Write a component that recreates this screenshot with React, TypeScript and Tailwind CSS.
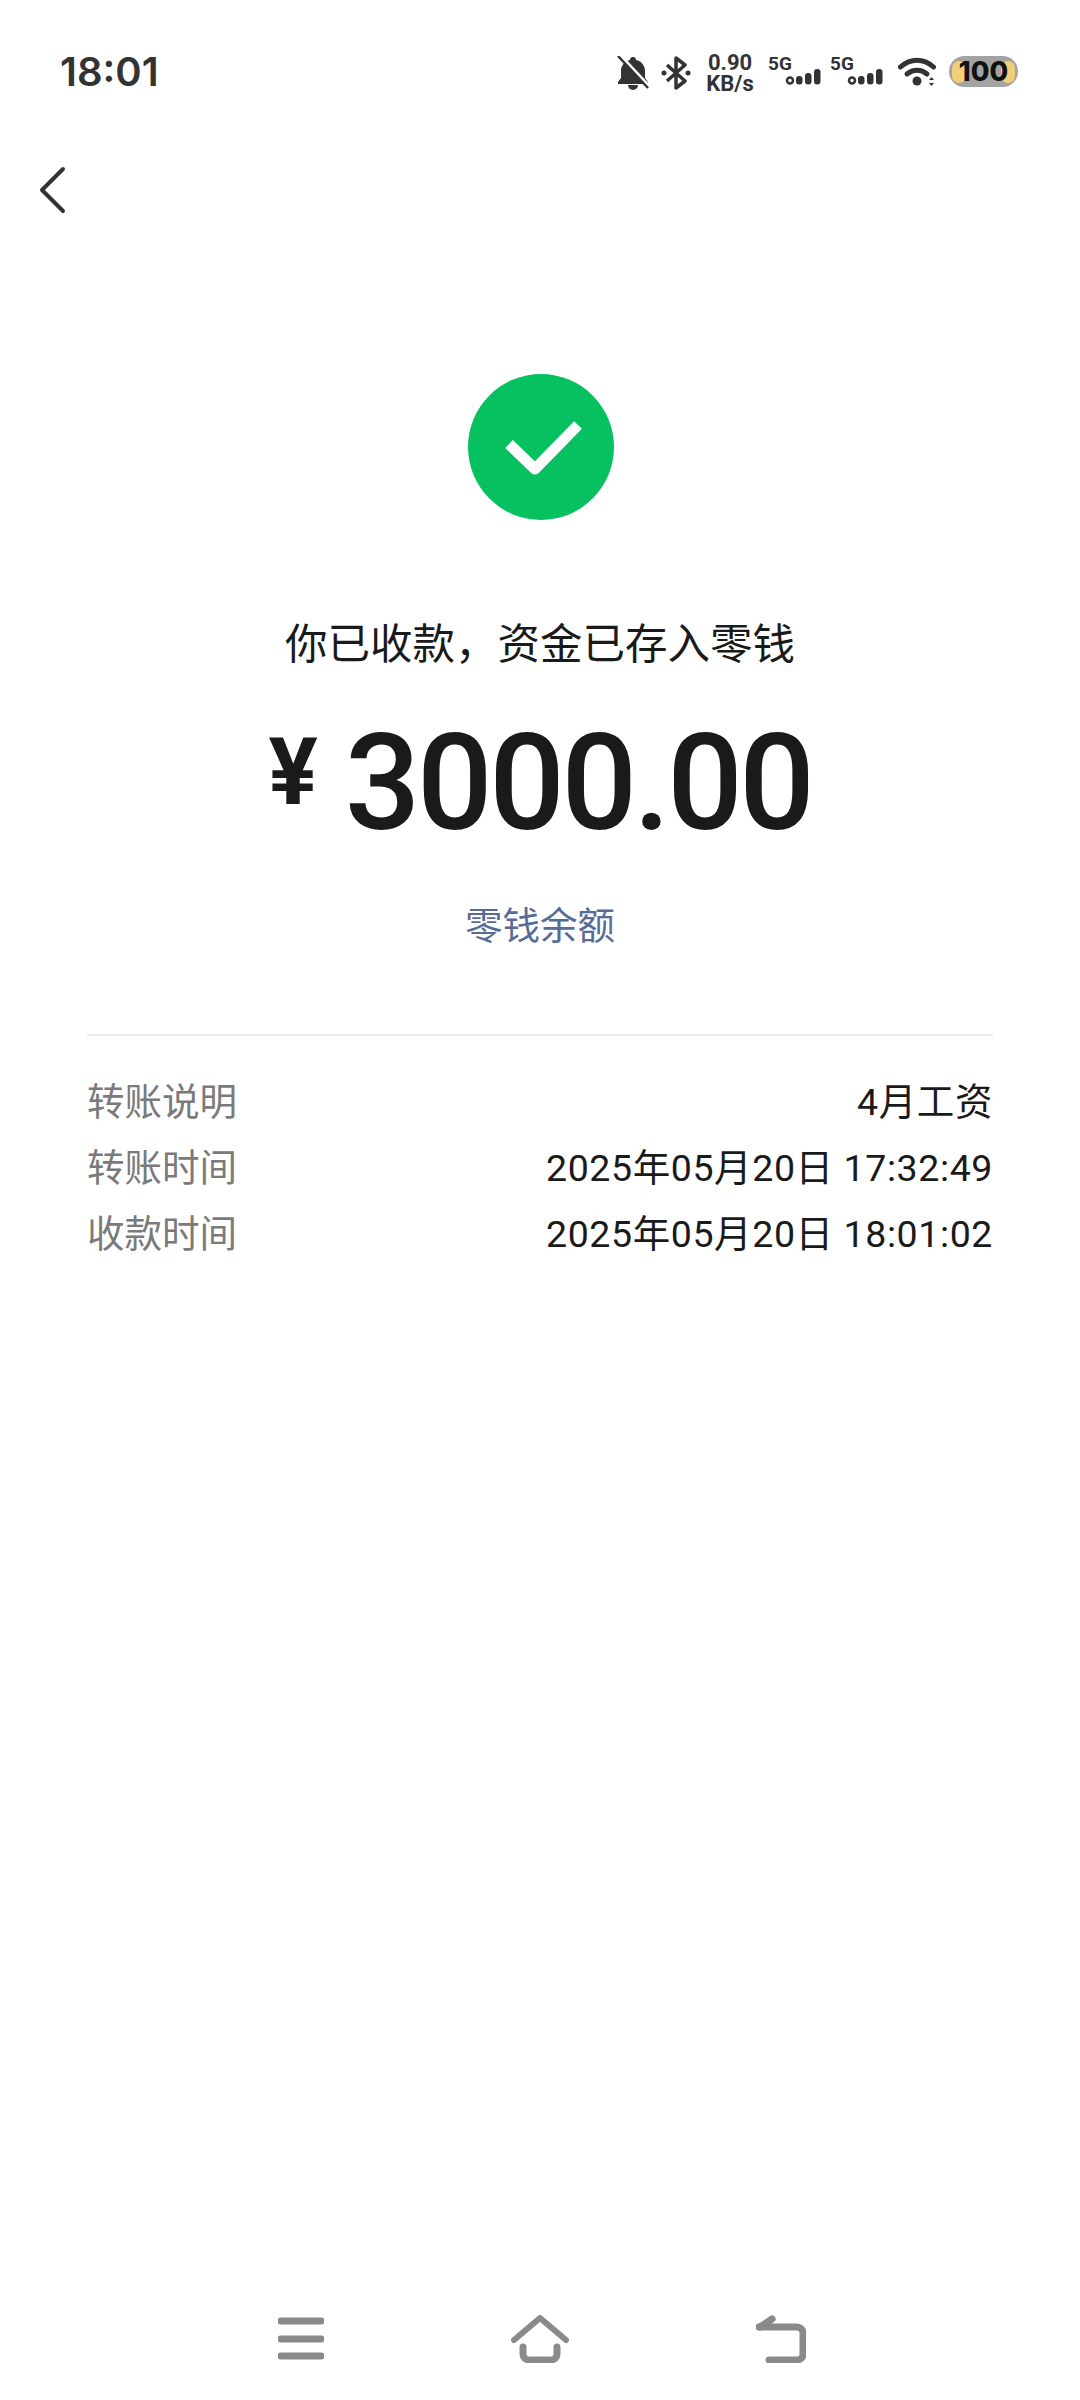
const cjk = "font-['Inter','Noto_Sans_CJK_SC',sans-serif]";

const rows = [
  { label: '转账说明', value: '4月工资' },
  { label: '转账时间', value: '2025年05月20日 17:32:49' },
  { label: '收款时间', value: '2025年05月20日 18:01:02' },
];

function Signal() {
  return (
    <div className="flex flex-col w-[54px]">
      <span className="font-['Roboto',sans-serif] font-bold text-[19px] leading-[17px] text-[#333] h-[15px]">5G</span>
      <svg width="54" height="18" viewBox="0 0 54 18" className="-mt-[2px]">
        <circle cx="22" cy="12.500" r="3" fill="none" stroke="#333" strokeWidth="2.500" />
        <rect x="28" y="8" width="6.500" height="8.500" rx="3" fill="#333" />
        <rect x="37" y="5" width="6.500" height="11.500" rx="3" fill="#333" />
        <rect x="46" y="1" width="6.500" height="15.500" rx="3" fill="#333" />
      </svg>
    </div>
  );
}

function StatusBar() {
  return (
    <div className="h-[142px] pt-[52px] pl-[60px] pr-[62px] flex items-start justify-between">
      <span className="font-['Inter',sans-serif] font-semibold text-[40px] leading-[40px] text-[#333]">18:01</span>
      <div className="flex items-center h-[40px] mt-[1px]">
        {/* muted bell */}
        <svg width="32" height="34" viewBox="0 0 32 34" className="mr-[12px]">
          <path d="M16 1a3 3 0 0 1 3 3c5 1 9 5 9 11v7l3 4v2H1v-2l3-4v-7c0-6 4-10 9-11a3 3 0 0 1 3-3z" fill="#333" />
          <path d="M11 29h10a5 5 0 0 1-10 0z" fill="#333" />
          <path d="M3 -1l30 32" stroke="#fff" strokeWidth="3" />
          <path d="M1 0l30 32" stroke="#333" strokeWidth="2.500" />
        </svg>
        {/* bluetooth */}
        <svg width="30" height="34" viewBox="0 0 30 34" className="mr-[14px]">
          <path d="M6 9l18 16-9 7V2l9 7L6 25" fill="none" stroke="#333" strokeWidth="3.500" strokeLinejoin="round" />
          <circle cx="3" cy="17" r="2.500" fill="#333" />
          <circle cx="27" cy="17" r="2.500" fill="#333" />
        </svg>
        <div className="flex flex-col items-center w-[50px] mr-[13px] font-['Roboto',sans-serif] font-bold text-[22px] leading-[21px] text-[#333]">
          <span>0.90</span>
          <span>KB/s</span>
        </div>
        <div className="mr-[8px] -mt-[6px]"><Signal /></div>
        <div className="mr-[14px] -mt-[6px]"><Signal /></div>
        {/* wifi */}
        <svg width="38" height="30" viewBox="0 0 38 30" className="mr-[13px] -mt-[3px]">
          <path d="M2.500 10c10-9 23-9 33 0" fill="none" stroke="#333" strokeWidth="5" strokeLinecap="round" />
          <path d="M9 17c6-5 14-5 20 0" fill="none" stroke="#333" strokeWidth="5" strokeLinecap="round" />
          <circle cx="19" cy="24" r="4.500" fill="#333" />
          <path d="M31 23h5l-2.500 -3z M31 26h5l-2.500 3z" fill="#333" />
        </svg>
        {/* battery */}
        <div className="relative -mt-[3px] w-[69px] h-[31px] rounded-full bg-[#a3a3a3] flex items-center justify-center overflow-hidden">
          <span className="absolute left-[3px] w-[14px] h-[22px] rounded-full bg-[#f0cf78]" />
          <span className="absolute right-[3px] w-[14px] h-[22px] rounded-full bg-[#f0cf78]" />
          <span className="relative font-['Inter',sans-serif] font-extrabold text-[27px] leading-[31px] text-[#111]">100</span>
        </div>
      </div>
    </div>
  );
}

export default function App() {
  return (
    <div className={`${cjk} w-[1080px] h-[2400px] bg-white flex flex-col`}>
      <StatusBar />

      {/* Back button */}
      <div className="h-[96px] pl-[38px] flex items-center">
        <svg width="32" height="48" viewBox="0 0 32 48">
          <path d="M25 3L4 24l21 21" fill="none" stroke="#333" strokeWidth="4" strokeLinecap="round" strokeLinejoin="round" />
        </svg>
      </div>

      {/* Result */}
      <div className="flex flex-col items-center pt-[136px]">
        <div className="ml-[2px] w-[146px] h-[146px] rounded-full bg-[#07c160] flex items-center justify-center">
          <svg width="78" height="60" viewBox="0 0 78 60" className="ml-[3px]">
            <path d="M5 27l26 25L74 8" fill="none" stroke="#fff" strokeWidth="11" strokeLinejoin="round" />
          </svg>
        </div>
        <div className="mt-[100px] h-[48px] leading-[48px] text-[42.500px] text-[#1a1a1a]">你已收款，资金已存入零钱</div>
        <div className="mt-[44px] flex items-start h-[140px] text-[#1a1a1a] font-['Roboto',sans-serif]">
          <span className="font-bold text-[92px] leading-[122px] mr-[27px]">¥</span>
          <span className="font-medium text-[133px] leading-[144px] tracking-[-3.400px]">3000.00</span>
        </div>
        <div className="mt-[52px] h-[44px] leading-[44px] text-[37.500px] text-[#576b95]">零钱余额</div>
      </div>

      {/* Details */}
      <div className="mx-[87px] mt-[86px] pt-[33px] border-t-2 border-[#ebebeb] flex flex-col">
        {rows.map((row) => (
          <div key={row.label} className="h-[66px] flex items-center justify-between text-[37.500px]">
            <span className="text-[#7a7a7a]">{row.label}</span>
            <span className="text-[#1a1a1a] tracking-[0.600px] font-['Roboto','Noto_Sans_CJK_SC',sans-serif]">{row.value}</span>
          </div>
        ))}
      </div>

      {/* System nav */}
      <div className="mt-auto mb-[35px] h-[52px] pl-[278px] pr-[274px] flex items-center justify-between">
        <svg width="46" height="46" viewBox="0 0 46 46">
          <path d="M3 5h40M3 23h40M3 40h40" stroke="#8a8a8a" strokeWidth="7" strokeLinecap="round" />
        </svg>
        <svg width="58" height="48" viewBox="0 0 58 48">
          <path d="M3 25L29 3l26 22" fill="none" stroke="#8a8a8a" strokeWidth="6" strokeLinecap="round" strokeLinejoin="round" />
          <path d="M12 32v7a6 6 0 0 0 6 6h22a6 6 0 0 0 6-6v-7" fill="none" stroke="#8a8a8a" strokeWidth="7" strokeLinecap="round" />
        </svg>
        <svg width="50" height="48" viewBox="0 0 50 48">
          <path d="M3 12h38a6 6 0 0 1 6 6v21a6 6 0 0 1-6 6H13" fill="none" stroke="#8a8a8a" strokeWidth="7" strokeLinecap="round" />
          <path d="M4 12L16 4" stroke="#8a8a8a" strokeWidth="7" strokeLinecap="round" />
        </svg>
      </div>
    </div>
  );
}
